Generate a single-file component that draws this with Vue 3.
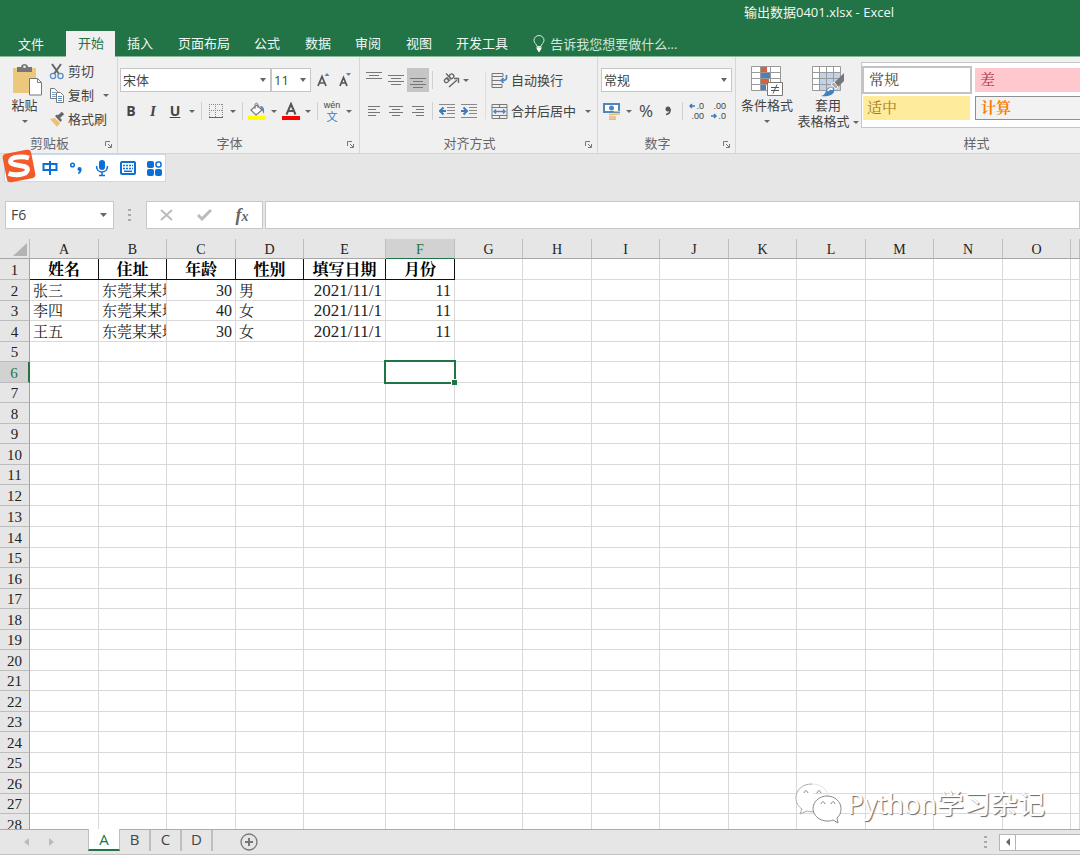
<script setup>
import { ref } from 'vue'

const menus = ['插入', '页面布局', '公式', '数据', '审阅', '视图', '开发工具']
const cols = 'ABCDEFGHIJKLMNO'.split('')
const rowCount = 28
const data = [
  ['姓名', '住址', '年龄', '性别', '填写日期', '月份'],
  ['张三', '东莞某某地', '30', '男', '2021/11/1', '11'],
  ['李四', '东莞某某地', '40', '女', '2021/11/1', '11'],
  ['王五', '东莞某某地', '30', '女', '2021/11/1', '11'],
]
const cell = (r, c) => (data[r - 1] && data[r - 1][c]) || ''
const cellClass = (r, c) => ({
  head: r === 1 && c < 6,
  num: r > 1 && (c === 2 || c === 4 || c === 5),
  date: r > 1 && c === 4,
  sel: r === 6 && c === 5,
})
const fontName = ref('宋体')
const fontSize = ref('11')
const numFormat = ref('常规')
const cellName = ref('F6')
const formula = ref('')
</script>

<template>
  <div class="app">
    <header class="top">
      <div class="title">输出数据0401.xlsx - Excel</div>
      <nav class="menu">
        <button class="file">文件</button>
        <button class="on">开始</button>
        <button v-for="m in menus" :key="m" class="tab">{{ m }}</button>
        <button class="tell">
          <svg width="12" height="17" viewBox="0 0 12 17" fill="none" stroke="#d8eadf">
            <path d="M4 11.500C4 9 1 8.500 1 5.300a5 4.800 0 0 1 10 0C11 8.500 8 9 8 11.500z" />
            <path d="M3.500 13h5M4 14.500h4M5 16h2" stroke="#fff" stroke-width="1.500" />
          </svg>告诉我您想要做什么...
        </button>
      </nav>
    </header>

    <section class="ribbon">
      <div class="group clip">
        <div class="body">
          <button class="big paste">
            <svg width="32" height="34" viewBox="0 0 32 34">
              <rect x="2" y="5" width="23" height="25" fill="#edc77c" />
              <path d="M6 9V4h4c0-4 7-4 7 0h4v5z" fill="#777" />
              <circle cx="13.500" cy="3.800" r="1.300" fill="#f0f0f0" />
              <path d="M18.500 15.500h8l4 4v12.500h-12z" fill="#fff" stroke="#777" />
              <path d="M26.500 15.500v4h4" fill="none" stroke="#777" />
            </svg>
            <span>粘贴</span>
            <svg class="car" width="6" height="3"><path d="M0 0h6L3 3z" /></svg>
          </button>
          <div class="clips">
            <button>
              <svg width="16" height="17" viewBox="0 0 16 17" fill="none">
                <path d="M3 1l7 10M12 1L5 11" stroke="#666" stroke-width="2" />
                <circle cx="4" cy="13" r="2.600" stroke="#5b8fc4" stroke-width="1.300" /><circle cx="11.500" cy="13" r="2.600" stroke="#5b8fc4" stroke-width="1.300" />
              </svg>剪切
            </button>
            <button>
              <svg width="16" height="17" viewBox="0 0 16 17" fill="#fff" stroke="#777">
                <path d="M1.500 1.500h4l3 3v7h-7z" /><path d="M3 5.500h4M3 7.500h4M3 9.500h4" stroke="#7ba5d0" />
                <path d="M7.500 5.500h4l3 3v7h-7z" /><path d="M9 9.500h4M9 11.500h4M9 13.500h4" stroke="#5b8fc4" />
              </svg>复制
              <svg class="car more" width="6" height="3"><path d="M0 0h6L3 3z" /></svg>
            </button>
            <button>
              <svg width="16" height="17" viewBox="0 0 16 17">
                <path d="M1 8l5-1 5 5-3 4z" fill="#edc07a" />
                <path d="M6 5l2-1.500 5 5.500-1.500 2z" fill="#666" /><path d="M9.500 6l4.500-4" stroke="#666" stroke-width="3.500" />
              </svg>格式刷
            </button>
          </div>
        </div>
        <div class="foot"><span>剪贴板</span><button aria-label="剪贴板设置"><svg width="7" height="7"><path d="M.5 5V.5H5M3 3l3 3M6.500 3v3.500H3" fill="none" stroke="#777" /></svg></button></div>
      </div>

      <div class="group font">
        <div class="body rows">
          <div class="row">
            <label class="combo name">
              <select v-model="fontName" aria-label="字体"><option>宋体</option></select>
              <svg class="car" width="6" height="4"><path d="M0 0h6L3 4z" /></svg>
            </label>
            <label class="combo size">
              <select v-model="fontSize" aria-label="字号"><option>11</option></select>
              <svg class="car" width="6" height="4"><path d="M0 0h6L3 4z" /></svg>
            </label>
            <button class="ib grow" aria-label="增大字号">
              <svg width="14" height="16" viewBox="0 0 14 16"><path d="M2 14L6 4.500 10 14M3.500 11h5" fill="none" stroke="#555" stroke-width="1.700" /><path d="M8.500 4l2.500-3 2.500 3z" fill="#4f86c0" /></svg>
            </button>
            <button class="ib" aria-label="减小字号">
              <svg width="14" height="16" viewBox="0 0 14 16"><path d="M2 14L5.500 5.500 9 14M3.500 11h4.500" fill="none" stroke="#555" stroke-width="1.700" /><path d="M8 1l2.500 3L13 1z" fill="#4f86c0" /></svg>
            </button>
          </div>
          <div class="row">
            <button class="ib b">B</button><button class="ib i">I</button><button class="ib u">U</button>
            <button class="cb" aria-label="下划线选项"><svg class="car" width="6" height="3"><path d="M0 0h6L3 3z" /></svg></button>
            <i class="sep"></i>
            <button class="ib" aria-label="边框">
              <svg width="16" height="16" viewBox="0 0 16 16" fill="none" stroke="#888"><path d="M1.500 1v13M7.500 1v13M14.500 1v13M1 1.500h14M1 7.500h14" stroke-dasharray="1 1" /><path d="M1 14.500h14" stroke="#666" /></svg>
            </button>
            <button class="cb" aria-label="边框选项"><svg class="car" width="6" height="3"><path d="M0 0h6L3 3z" /></svg></button>
            <i class="sep"></i>
            <button class="ib" aria-label="填充颜色">
              <svg width="18" height="18" viewBox="0 0 18 18"><rect y="14" width="18" height="4" fill="#ff0" /><path d="M3 8l6-5 5 5-6 5z" fill="#fff" stroke="#777" stroke-width="1.200" /><path d="M7 7V3c0-2.500 3-2.500 3 0v3" fill="none" stroke="#777" /><path d="M12 4c4 0 4.500 3 4 8-1-1-1-3-2-4z" fill="#4f86c0" /></svg>
            </button>
            <button class="cb" aria-label="填充颜色选项"><svg class="car" width="6" height="3"><path d="M0 0h6L3 3z" /></svg></button>
            <button class="ib" aria-label="字体颜色">
              <svg width="18" height="18" viewBox="0 0 18 18"><rect y="14" width="18" height="4" fill="#f00" /><path d="M4.500 12.500L9 2l4.500 10.500M6 9h6" fill="none" stroke="#555" stroke-width="2" /></svg>
            </button>
            <button class="cb" aria-label="字体颜色选项"><svg class="car" width="6" height="3"><path d="M0 0h6L3 3z" /></svg></button>
            <i class="sep"></i>
            <button class="ib pin"><span>wén</span><b>文</b></button>
            <button class="cb" aria-label="拼音选项"><svg class="car" width="6" height="3"><path d="M0 0h6L3 3z" /></svg></button>
          </div>
        </div>
        <div class="foot"><span>字体</span><button aria-label="字体设置"><svg width="7" height="7"><path d="M.5 5V.5H5M3 3l3 3M6.500 3v3.500H3" fill="none" stroke="#777" /></svg></button></div>
      </div>

      <div class="group align">
        <div class="body">
          <div class="rows">
            <div class="row">
              <button class="ib" aria-label="顶端对齐"><svg width="16" height="16" stroke="#777"><path d="M0 .5h16M3 3.500h10M0 6.500h16" /></svg></button>
              <button class="ib" aria-label="垂直居中"><svg width="16" height="16" stroke="#777"><path d="M0 3.500h16M3 6.500h10M0 9.500h16M3 12.500h10" /></svg></button>
              <button class="ib pressed" aria-label="底端对齐"><svg width="16" height="16" stroke="#777"><path d="M0 6.500h16M3 9.500h10M0 12.500h16M3 15.500h10" /></svg></button>
              <i class="sep"></i>
              <button class="ib ab" aria-label="方向"><svg width="18" height="16" viewBox="0 0 18 16" fill="none" stroke="#666"><g transform="rotate(-42 7 7)" stroke-width="1.300"><circle cx="4" cy="6.500" r="2" /><path d="M6.500 4v5M8.500 1v8" /><circle cx="10.800" cy="6.700" r="2.200" /></g><path d="M7 15l8-7M12 6.500h4.500V11" stroke-width="1.400" /></svg></button>
              <button class="cb" aria-label="方向选项"><svg class="car" width="6" height="3"><path d="M0 0h6L3 3z" /></svg></button>
            </div>
            <div class="row">
              <button class="ib" aria-label="左对齐"><svg width="12" height="12" stroke="#777"><path d="M0 1.500h12M0 4.500h8M0 7.500h12M0 10.500h8" /></svg></button>
              <button class="ib" aria-label="居中"><svg width="14" height="12" stroke="#777"><path d="M0 1.500h14M3 4.500h8M0 7.500h14M3 10.500h8" /></svg></button>
              <button class="ib" aria-label="右对齐"><svg width="12" height="12" stroke="#777"><path d="M0 1.500h12M4 4.500h8M0 7.500h12M4 10.500h8" /></svg></button>
              <i class="sep"></i>
              <button class="ib" aria-label="减少缩进"><svg width="16" height="14" stroke="#888"><path d="M0 .5h16M8 3.500h8M8 6.500h8M8 9.500h8M0 13.500h16" /><path d="M7 7H2M4.500 3.500L1 7l3.500 3.500" fill="none" stroke="#4078b8" stroke-width="2" /></svg></button>
              <button class="ib" aria-label="增加缩进"><svg width="16" height="14" stroke="#888"><path d="M0 .5h16M8 3.500h8M8 6.500h8M8 9.500h8M0 13.500h16" /><path d="M0 7h5M2.500 3.500L6 7l-3.500 3.500" fill="none" stroke="#4078b8" stroke-width="2" /></svg></button>
            </div>
          </div>
          <div class="rows wraps">
            <button class="row">
              <svg width="17" height="17" viewBox="0 0 17 17" fill="none" stroke="#777"><path d="M1 1.500h11v3H1zM1 4.500v11h10v-3M1 8.500h8M1 12.500h10" /><path d="M15.500 3v3c0 2-2 2.500-5 2.500M12.500 6L10 8.500l2.500 2.500" stroke="#4f86c0" stroke-width="1.700" /></svg>自动换行
            </button>
            <button class="row">
              <svg width="17" height="17" viewBox="0 0 17 17" fill="none" stroke="#777"><path d="M1 1.500h15v14H1zM1 4.500h15M1 12.500h15M8.500 1v3.500M8.500 12.500V16" /><path d="M3 8.500h11M5 6.500l-2 2 2 2M12 6.500l2 2-2 2" stroke="#4f86c0" stroke-width="1.500" /></svg>合并后居中
              <svg class="car more" width="6" height="3"><path d="M0 0h6L3 3z" /></svg>
            </button>
          </div>
        </div>
        <div class="foot"><span>对齐方式</span><button aria-label="对齐设置"><svg width="7" height="7"><path d="M.5 5V.5H5M3 3l3 3M6.500 3v3.500H3" fill="none" stroke="#777" /></svg></button></div>
      </div>

      <div class="group number">
        <div class="body rows">
          <div class="row">
            <label class="combo fmt">
              <select v-model="numFormat" aria-label="数字格式"><option>常规</option></select>
              <svg class="car" width="6" height="4"><path d="M0 0h6L3 4z" /></svg>
            </label>
          </div>
          <div class="row">
            <button class="ib" aria-label="会计数字格式">
              <svg width="18" height="18" viewBox="0 0 18 18"><rect x="1" y="2" width="15" height="8" fill="#fff" stroke="#4f86c0" stroke-width="2" /><circle cx="8.500" cy="6" r="2.500" fill="#4f86c0" /><path d="M11 9.500h6M11 12h6M6 12.500h6M6 15h7M6 17.200h7" stroke="#e8bb74" stroke-width="1.700" /></svg>
            </button>
            <button class="cb" aria-label="会计选项"><svg class="car" width="6" height="3"><path d="M0 0h6L3 3z" /></svg></button>
            <button class="ib pct">%</button>
            <button class="ib" aria-label="千位分隔"><svg width="8" height="10" viewBox="0 0 8 10"><circle cx="4" cy="3" r="2.500" fill="#555" /><path d="M6 3c.5 3-1 5-4 5.500" fill="none" stroke="#555" stroke-width="1.500" /></svg></button>
            <i class="sep"></i>
            <button class="ib dec"><span><svg width="6" height="6"><path d="M6 3H1M3 1L1 3l2 2" fill="none" stroke="#4078b8" stroke-width="1.500" /></svg>.0</span><span>.00</span></button>
            <button class="ib dec"><span>.00</span><span><svg width="6" height="6"><path d="M0 3h5M3 1l2 2-2 2" fill="none" stroke="#4078b8" stroke-width="1.500" /></svg>.0</span></button>
          </div>
        </div>
        <div class="foot"><span>数字</span><button aria-label="数字设置"><svg width="7" height="7"><path d="M.5 5V.5H5M3 3l3 3M6.500 3v3.500H3" fill="none" stroke="#777" /></svg></button></div>
      </div>

      <div class="group styles">
        <div class="body">
          <button class="big cond">
            <svg width="34" height="32" viewBox="0 0 34 32">
              <path d="M1.500 1.500h29v24h-29z" fill="#fff" />
              <path d="M11 2h6v6h-6zM11 14h8v5h-8z" fill="#d9603f" /><path d="M11 8h9v6h-9zM11 19h5v6h-5z" fill="#4a82bd" />
              <path d="M1.500 1.500h29v24h-29zM10.500 1v24M20.500 1v24M1.500 7.500h29M1.500 13.500h29M1.500 19.500h29" fill="none" stroke="#999" />
              <path d="M17.500 17.500h15v13h-15z" fill="#fff" stroke="#777" /><path d="M21 22.500h8M21 25.500h8M27 19.500l-4 9" stroke="#555" />
            </svg>
            <span>条件格式</span>
            <svg class="car" width="6" height="3"><path d="M0 0h6L3 3z" /></svg>
          </button>
          <button class="big tbl">
            <svg width="34" height="32" viewBox="0 0 34 32">
              <path d="M1.500 1.500h28v24h-28z" fill="#fff" /><path d="M9 8h21v18H9z" fill="#c0d3e8" />
              <path d="M1.500 1.500h28v24h-28zM8.500 1v24M15.500 1v24M22.500 1v24M1.500 7.500h28M1.500 13.500h28M1.500 19.500h28" fill="none" stroke="#999" />
              <path d="M33 8v8l-6 6-4-4z" fill="#777" /><path d="M23 17l4 5-2 2-5-5z" fill="#aaa" stroke="#f0f0f0" /><path d="M10 31c5-1 4-5 7-8 3-2 7 0 6 4-2 4-8 5-13 4z" fill="#4581bf" /><path d="M17 26c1-3 4-3 4-1" stroke="#fff" stroke-width="2" fill="none" />
            </svg>
            <span>套用</span>
            <span class="two">表格格式 <svg class="car" width="6" height="3"><path d="M0 0h6L3 3z" /></svg></span>
          </button>
          <div class="gallery">
            <button class="g normal">常规</button><button class="g bad">差</button>
            <button class="g mid">适中</button><button class="g calc">计算</button>
          </div>
        </div>
        <div class="foot"><span>样式</span></div>
      </div>
    </section>

    <section class="strip">
      <div class="ime">
        <svg class="logo" width="34" height="34" viewBox="0 0 34 34">
          <rect x="2.500" y="2.500" width="29" height="29" rx="4" fill="#f4592a" transform="rotate(-11 17 17)" />
          <path d="M27 9C21 7 8.500 7.500 8.500 12.500 8.500 17.500 25.500 15 25.500 20.500 25 26.500 12 26.500 6.500 24.500" fill="none" stroke="#fff" stroke-width="4.800" />
        </svg>
        <button aria-label="中文"><svg width="16" height="16" fill="none" stroke="#0a6fd6" stroke-width="2"><path d="M1.500 4h13v6h-13zM8 1v14" /></svg></button>
        <button aria-label="标点"><svg width="14" height="14"><circle cx="3.500" cy="4" r="1.800" fill="none" stroke="#0a6fd6" stroke-width="1.500" /><circle cx="10.500" cy="8" r="2" fill="#0a6fd6" /><path d="M11.800 8c0 2-.5 3.500-2.500 4.500" fill="none" stroke="#0a6fd6" stroke-width="1.500" /></svg></button>
        <button aria-label="语音"><svg width="14" height="18"><rect x="4" y="1" width="6" height="10" rx="3" fill="#0a6fd6" /><path d="M1.500 7c0 8 11 8 11 0M7 13v3M4 16.500h6" fill="none" stroke="#0a6fd6" stroke-width="1.500" /></svg></button>
        <button aria-label="软键盘"><svg width="16" height="14" fill="none" stroke="#0a6fd6" stroke-width="2"><rect x="1" y="1" width="14" height="12" rx="1" /><path d="M3 4.500h10M3 7.500h10" stroke-width="1.500" stroke-dasharray="2 1" /><path d="M4 10.300h8" stroke-width="1.500" /></svg></button>
        <button aria-label="工具箱"><svg width="15" height="15" fill="#0a6fd6"><rect y="0" width="7" height="7" rx="2" /><rect y="8" width="7" height="7" rx="2" /><rect x="8" y="8" width="7" height="7" rx="2" /><rect x="9" y="1" width="5" height="5" rx="2" fill="none" stroke="#0a6fd6" stroke-width="1.500" /></svg></button>
      </div>
    </section>

    <section class="fbar">
      <div class="namebox">
        <input v-model="cellName" aria-label="名称框">
        <button aria-label="展开名称框"><svg class="car" width="7" height="4"><path d="M0 0h7L3.500 4z" /></svg></button>
      </div>
      <svg class="dots" width="3" height="12" fill="#aaa"><path d="M0 0h3v2H0zM0 5h3v2H0zM0 10h3v2H0z" /></svg>
      <div class="fx">
        <button aria-label="取消"><svg width="13" height="12" stroke="#bbb" stroke-width="2"><path d="M1 1l11 10M12 1L1 11" /></svg></button>
        <button aria-label="输入"><svg width="15" height="12" fill="none" stroke="#bbb" stroke-width="3"><path d="M1 6l4 4 9-9" /></svg></button>
        <button class="fn">f<sub>x</sub></button>
      </div>
      <input v-model="formula" class="formula" aria-label="编辑栏">
    </section>

    <main class="sheet">
      <table>
        <colgroup><col class="c-row"><col v-for="c in cols" :key="c" :class="'c-' + c"><col></colgroup>
        <thead>
          <tr>
            <th class="corner"><svg width="16" height="14"><path d="M15 0v13H1z" fill="#b4b4b4" /></svg></th>
            <th v-for="c in cols" :key="c" :class="{ act: c === 'F' }">{{ c }}</th>
            <th></th>
          </tr>
        </thead>
        <tbody>
          <tr v-for="r in rowCount" :key="r">
            <th :class="{ act: r === 6 }">{{ r }}</th>
            <td v-for="(c, k) in cols" :key="c" :class="cellClass(r, k)"><div v-if="cell(r, k)">{{ cell(r, k) }}</div><span v-if="r === 6 && k === 5" class="cursor"></span></td>
            <td></td>
          </tr>
        </tbody>
      </table>
      <div class="mark">
        <svg width="50" height="42" viewBox="0 0 50 42" fill="#fff" stroke="#8a8a8a">
          <path d="M17 1C7 1 1 7 1 15c0 5 2 8 6 11l-2 5 7-3c3 1 7 1 9 0" stroke="#aaa" />
          <path d="M17 1c9 0 15 5 16 12" stroke="#e4e4e4" fill="none" />
          <path d="M32 13c-8 0-14 6-14 12.500S24 38 32 38c2 0 4 0 6-1l5 3-1-5c3-3 4-5 4-9.500C46 19 40 13 32 13z" />
          <path d="M9 10c1-3 3-3 4 0M22 10c1-3 3-3 4 0M26 21c1-3 3-3 4 0M36 21c1-3 3-3 4 0" fill="none" />
        </svg>
        <span>Python学习杂记</span>
      </div>
    </main>

    <footer class="bottom">
      <div class="nav">
        <button aria-label="上一个"><svg width="5" height="8" fill="#bbb"><path d="M5 0v8L0 4z" /></svg></button>
        <button aria-label="下一个"><svg width="5" height="8" fill="#bbb"><path d="M0 0v8l5-4z" /></svg></button>
      </div>
      <div class="tabs">
        <button class="cur">A</button><button>B</button><button>C</button><button>D</button>
      </div>
      <button class="add" aria-label="新工作表"><svg width="18" height="18" fill="none" stroke="#777"><circle cx="9" cy="9" r="8" stroke-width="1.300" /><path d="M9 5v8M5 9h8" stroke-width="2" /></svg></button>
      <svg class="dots" width="3" height="12" fill="#aaa"><path d="M0 0h3v2H0zM0 5h3v2H0zM0 10h3v2H0z" /></svg>
      <div class="hscroll"><button aria-label="向左滚动"><svg width="4" height="8" fill="#666"><path d="M4 0v8L0 4z" /></svg></button></div>
    </footer>
  </div>
</template>

<style>
body { margin: 0; }
</style>

<style scoped>
.app { height: 100vh; display: flex; flex-direction: column; overflow: hidden; background: #e6e6e6; color: #444; font: 13px/16px "Open Sans", "Noto Sans CJK SC", sans-serif; }
* { box-sizing: border-box; }
button, input, select { font: inherit; color: inherit; background: none; border: 0; margin: 0; padding: 0; border-radius: 0; outline: 0; }
button { white-space: nowrap; display: flex; align-items: center; justify-content: center; flex-shrink: 0; }
svg { display: block; flex-shrink: 0; }
.car { fill: #666; }

.top { background: #227447; color: #f2f8f4; flex-shrink: 0; border-bottom: 1px solid #8ab89d; }
.title { height: 31px; line-height: 25px; padding-left: 744px; font-size: 13px; white-space: nowrap; }
.menu { display: flex; height: 25px; }
.menu button { padding: 0 12px 2px; }
.menu .tab:nth-child(odd) { padding-right: 13px; }
.menu .file { width: 66px; padding: 0 22px 0 18px; }
.menu .on { background: #f0f0f0; color: #227447; padding: 0 11px 3px 12px; height: 26px; }
.menu .tell { gap: 5px; color: #d2e6da; padding: 0 12px; }

.ribbon { display: flex; height: 97px; background: #f0f0f0; border-bottom: 1px solid #d4d4d4; overflow: hidden; flex-shrink: 0; }
.group { display: flex; flex-direction: column; border-right: 1px solid #d6d6d6; flex-shrink: 0; }
.clip { width: 118px; }
.font { width: 242px; }
.align { width: 238px; }
.number { width: 138px; }
.styles { width: 482px; }
.body { display: flex; flex: 1; }
.foot { display: flex; height: 18px; margin-bottom: 1px; color: #666; line-height: 18px; }
.foot span { flex: 1; text-align: center; }
.foot button { width: 18px; align-items: flex-end; padding-bottom: 4px; }
.big { flex-direction: column; justify-content: flex-start; padding-top: 6px; height: 76px; }
.big .car { margin-top: 7px; }
.paste { width: 49px; }
.paste > svg:first-child { margin-left: 4px; }
.cond { width: 62px; }
.cond > svg:first-child, .tbl > svg:first-child { margin-top: 2px; }
.tbl { width: 60px; }
.two { display: flex; align-items: center; gap: 3px; }
.big .two .car { margin-top: 2px; }
.clips { padding-top: 2px; }
.clips button { height: 24px; gap: 3px; }
.more { margin-left: 6px; }
.rows { display: flex; flex-direction: column; gap: 7px; padding-top: 11px; }
.font .rows { padding-left: 2px; }
.number .rows, .align .rows { padding-left: 3px; }
.row { display: flex; height: 24px; align-items: center; justify-content: flex-start; }
.combo { position: relative; height: 24px; background: #fff; border: 1px solid #c6c6c6; }
.combo select { appearance: none; width: 100%; height: 22px; padding: 0 2px; display: block; }
.combo .car { position: absolute; right: 4px; top: 9px; pointer-events: none; }
.name { width: 151px; }
.size { width: 40px; }
.fmt { width: 131px; }
.ib { width: 22px; height: 24px; }
.grow { margin-left: 1px; }
.cb { width: 12px; height: 24px; }
.sep { width: 1px; height: 18px; background: #d0d0d0; margin: 0 3px; }
.b { font-weight: 700; font-size: 14px; }
.i { font: italic 700 15px "Liberation Serif", serif; }
.u { font-weight: 700; font-size: 14px; text-decoration: underline; }
.pin { flex-direction: column; font: 9px/10px "Liberation Sans", sans-serif; }
.pin b { font-family: "Noto Sans CJK SC", sans-serif; font-size: 11px; font-weight: 400; line-height: 13px; color: #4078b8; }
.pressed { background: #c5c5c5; }
.ab { margin-left: 4px; }
.ab + .cb { width: 8px; }
.wraps { margin-left: 5px; position: relative; }
.wraps .row { gap: 3px; padding-left: 3px; }
.wraps::before { content: ""; position: absolute; left: 0; top: 15px; width: 1px; height: 47px; background: #dcdcdc; }
.pct { font-size: 17px; }
.dec { flex-direction: column; font: 9px/10px "Liberation Sans", sans-serif; align-items: flex-end; padding-right: 4px; }
.dec span { display: flex; align-items: center; gap: 1px; }
.gallery { margin-top: 5px; margin-left: 3px; height: 66px; flex: 1; display: grid; grid-template-columns: 110px 1fr; grid-auto-rows: 28px; column-gap: 3px; background: #fff; border: 1px solid #c6c6c6; padding-top: 3px; align-items: center; }
.g { justify-content: flex-start; height: 24px; font-family: "Liberation Serif", "Noto Serif CJK SC", "Noto Sans CJK SC", serif; font-size: 15px; padding-left: 5px; }
.normal { border: 2px solid #c3c3c3; height: 28px; }
.bad { background: #ffc7ce; color: #b13343; }
.mid { background: #ffeb9c; color: #a87b1a; margin: 0 2px 0 1px; padding-left: 4px; }
.calc { background: #f2f2f2; color: #fa7d00; border: 1px solid #8f8f8f; font-weight: 700; }

.strip { height: 47px; position: relative; flex-shrink: 0; }
.ime { position: absolute; left: 4px; top: 0; width: 162px; height: 28px; background: #fff; border: 1px solid #ccd9e8; display: flex; align-items: center; padding-left: 32px; }
.ime button { width: 26px; height: 26px; }
.logo { position: absolute; left: -3px; top: -6px; }

.fbar { display: flex; height: 28px; flex-shrink: 0; align-items: center; padding-left: 5px; }
.namebox, .fx, .formula { background: #fff; border: 1px solid #c8c8c8; height: 28px; display: flex; }
.namebox { width: 109px; }
.namebox input { flex: 1; min-width: 0; padding-left: 5px; font-size: 14px; }
.namebox button { width: 19px; }
.fbar .dots { margin: 0 15px 0 14px; }
.fx { width: 117px; }
.fx button { width: 38px; }
.fn { font: italic 700 18px/20px "Liberation Serif", serif; color: #666; }
.fn sub { font-size: 14px; line-height: 10px; vertical-align: 0; margin-top: 4px; }
.formula { flex: 1; min-width: 0; margin-left: 2px; padding: 0 6px; }

.sheet { flex: 1; min-height: 0; overflow: hidden; position: relative; margin-top: 10px; background: #fff; }
table { width: 100%; table-layout: fixed; border-collapse: separate; border-spacing: 0; font: 15px/18px "Liberation Serif", "Noto Serif CJK SC", "Noto Sans CJK SC", serif; color: #222; }
.c-row { width: 30px; }
.c-A, .c-C, .c-F, .c-H, .c-J, .c-L, .c-N { width: 69px; }
.c-B, .c-D, .c-G, .c-I, .c-K, .c-M, .c-O { width: 68px; }
.c-E { width: 82px; }
th, td { padding: 1px 0 0; height: 20px; line-height: 18px; border-right: 1px solid #d9d9d9; border-bottom: 1px solid #d9d9d9; }
th { background: #e6e6e6; font-weight: 400; border-color: #bdbdbd; }
thead th { font-size: 14px; line-height: 17px; padding-top: 2px; border-bottom-color: #a6a6a6; }
tbody th { border-right-color: #a0a0a0; }
tbody tr:nth-child(even) > *, tbody tr:nth-child(1) > *, tbody tr:nth-child(13) > * { height: 21px; }
.corner svg { margin-left: 12px; }
th.act { background: #d2d2d2; color: #227447; }
thead th.act { border-bottom: 1px solid #227447; }
tbody th.act { border-right: 2px solid #227447; }
td > div { overflow: hidden; white-space: nowrap; padding: 0 3px; height: 18px; }
td.num > div { text-align: right; font-size: 16px; }
td.date > div { font-size: 17px; }
td.head { border-color: #111; }
td.head > div { text-align: center; font-weight: 700; color: #000; font-size: 16px; }
td.sel { position: relative; }
.cursor { position: absolute; inset: -2px; border: 2px solid #227447; }
.cursor::after { content: ""; position: absolute; right: -3px; bottom: -3px; width: 5px; height: 5px; background: #227447; border-top: 1px solid #fff; border-left: 1px solid #fff; }

.mark { position: absolute; right: 35px; bottom: 4px; display: flex; align-items: center; gap: 2px; color: #fff; font: 27px/40px "Noto Sans", "Noto Sans CJK SC", sans-serif; text-shadow: 1px 1px 1px #666; white-space: nowrap; }

.bottom { height: 26px; flex-shrink: 0; display: flex; border-top: 1px solid #ababab; border-bottom: 1px solid #c4c4c4; align-items: center; }
.nav { display: flex; width: 88px; padding-left: 14px; }
.nav button { width: 25px; height: 22px; }
.tabs { display: flex; align-self: flex-start; font-size: 15px; }
.tabs button { width: 31px; height: 21px; padding-bottom: 4px; border-right: 2px solid #bfbfbf; }
.tabs .cur { width: 32px; height: 22px; margin-top: -1px; background: #fff; color: #227447; border: 1px solid #bfbfbf; border-top: 0; border-bottom: 2px solid #227447; padding-bottom: 1px; }
.add { margin-left: 27px; }
.bottom .dots { margin-left: auto; margin-right: 12px; }
.hscroll { width: 81px; height: 17px; background: #fff; border: 1px solid #b5b5b5; border-right: 0; display: flex; }
.hscroll button { width: 16px; border-right: 1px solid #b5b5b5; }
</style>
